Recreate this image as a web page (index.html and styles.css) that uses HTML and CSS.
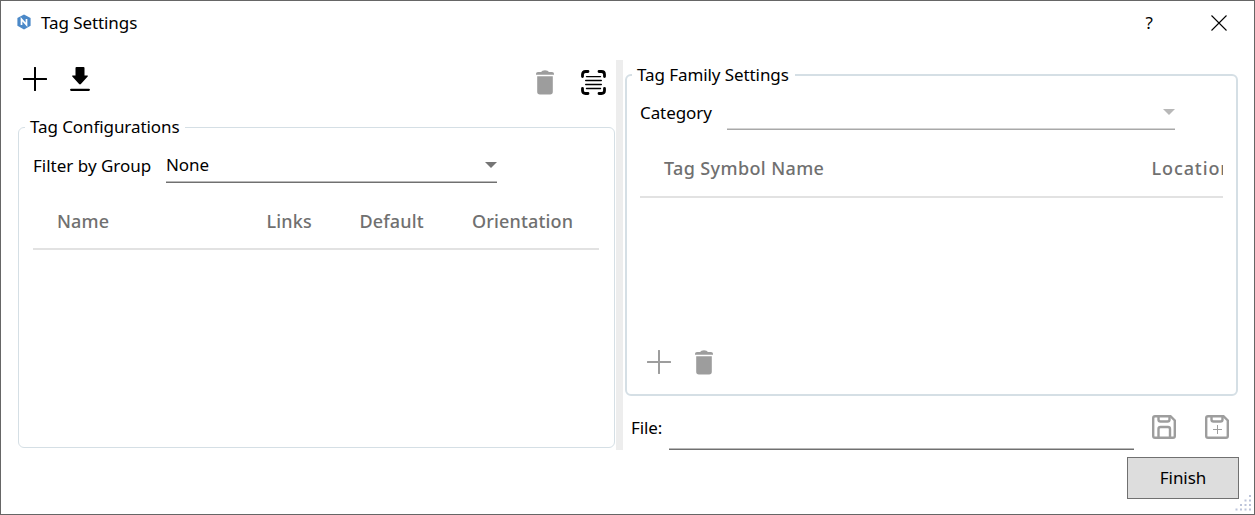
FILE: index.html
```html
<!DOCTYPE html>
<html lang="en">
<head>
<meta charset="utf-8">
<title>Tag Settings</title>
<link rel="stylesheet" href="styles.css">
</head>
<body>
<div class="window">
  <header class="titlebar">
    <svg class="app-icon" width="14" height="16" viewBox="0 0 14 16"><path d="M7 .4 13.6 4v7.800L7 15.500.4 11.800V4z" fill="#4b89c8"/><path d="M4.500 11V5.200L9.500 10.800V5" fill="none" stroke="#fff" stroke-width="1.700"/></svg>
    <h1 class="title">Tag Settings</h1>
    <span class="help">?</span>
    <svg class="close" width="16" height="16" viewBox="0 0 16 16"><path d="M.5.5l15 15M15.500.5l-15 15" stroke="#000" stroke-width="1.100"/></svg>
  </header>
  <main class="content">
    <section class="left">
      <div class="toolbar">
        <svg class="add" width="24" height="24" viewBox="0 0 24 24"><path d="M12 .8v22.400M.8 12h22.400" stroke="#000" stroke-width="2" stroke-linecap="round"/></svg>
        <svg class="download" width="20" height="25" viewBox="0 0 20 25"><path d="M6.500 0h7q1 0 1 1V8.500h2.700q1.300 0 .5 1l-6.800 7.600q-.9.900-1.800 0L2.300 9.500q-.8-1 .5-1h2.700V1q0-1 1-1z"/><path d="M1.200 22.800h17.600" stroke="#000" stroke-width="2.300" stroke-linecap="round"/></svg>
        <svg class="trash" width="18" height="25" viewBox="0 0 18 25"><path d="M0 3.800Q0 2 2 2h3Q6 .3 9 .3T13 2h3q2 0 2 1.800v1H0zM1.200 6.300h15.600v15.500q0 2.700-2.700 2.700H3.900q-2.700 0-2.700-2.700z" fill="#9d9d9d"/></svg>
        <svg class="scan" width="25" height="25" viewBox="0 0 25 25"><path d="M1.500 6.500V4.500q0-3 3-3H7M18 1.500h2.500q3 0 3 3V6.500M23.500 18.500v2q0 3-3 3H18M7 23.500H4.500q-3 0-3-3V18.500" fill="none" stroke="#000" stroke-width="2.800" stroke-linecap="round"/><path d="M5.500 6.600h14M4.700 10.500h15.600M4.700 14.500h15.600M5.500 18.500h14" stroke="#000" stroke-width="1.400" stroke-linecap="round"/></svg>
      </div>
      <fieldset class="group configurations">
        <legend><span class="t-config">Tag Configurations</span></legend>
        <div class="field-row">
          <label class="t-filter">Filter by Group</label>
          <div class="select"><span class="t-none">None</span><svg width="12" height="6" viewBox="0 0 12 6"><path d="M0 0h12L6 6z" fill="#757575"/></svg></div>
        </div>
        <div class="table-head">
          <span class="t-name">Name</span><span class="t-links">Links</span><span class="t-default">Default</span><span class="t-orient">Orientation</span>
        </div>
      </fieldset>
    </section>
    <div class="splitter"></div>
    <section class="right">
      <fieldset class="group family">
        <legend><span class="t-family">Tag Family Settings</span></legend>
        <div class="field-row">
          <label class="t-category">Category</label>
          <div class="select disabled"><svg width="12" height="6" viewBox="0 0 12 6"><path d="M0 0h12L6 6z" fill="#b8b8b8"/></svg></div>
        </div>
        <div class="table-head">
          <span class="t-symbol">Tag Symbol Name</span><span class="t-location">Location</span>
        </div>
        <div class="row-actions">
          <svg width="24" height="24" viewBox="0 0 24 24"><path d="M12 .8v22.400M.8 12h22.400" stroke="#9d9d9d" stroke-width="2" stroke-linecap="round"/></svg>
          <svg width="18" height="25" viewBox="0 0 18 25"><path d="M0 3.800Q0 2 2 2h3Q6 .3 9 .3T13 2h3q2 0 2 1.800v1H0zM1.200 6.300h15.600v15.500q0 2.700-2.700 2.700H3.900q-2.700 0-2.700-2.700z" fill="#9d9d9d"/></svg>
        </div>
      </fieldset>
      <div class="file-row">
        <label class="t-file">File:</label>
        <div class="file-input"></div>
        <svg class="save" width="24" height="24" viewBox="0 0 24 24" fill="none" stroke="#9d9d9d" stroke-width="2.400"><path d="M3 1.200h15.500L22.800 5.500V21q0 1.800-1.800 1.800H3q-1.800 0-1.800-1.800V3q0-1.800 1.800-1.800z"/><path d="M6.500 1v3.500q0 2 2 2h7q2 0 2-2V1M6.500 23V14q0-2 2-2h7.500q2 0 2 2v9"/></svg>
        <svg class="save-add" width="24" height="24" viewBox="0 0 24 24" fill="none" stroke="#9d9d9d" stroke-width="2.400"><path d="M3 1.200h15.500L22.800 5.500V21q0 1.800-1.800 1.800H3q-1.800 0-1.800-1.800V3q0-1.800 1.800-1.800z"/><path d="M6.500 1v3.500q0 2 2 2h7q2 0 2-2V1"/><path d="M12.500 10v9M8 14.500h9" stroke-width="1"/></svg>
      </div>
    </section>
  </main>
  <footer class="footer"><button class="finish"><span class="t-finish">Finish</span></button></footer>
  <svg class="grip" width="17" height="17" viewBox="0 0 17 17" fill="#bcc4da"><path d="M14 0h2v2h-2zM14 4.500h2v2h-2zM14 9h2v2h-2zM14 13.500h2v2h-2zM9.500 4.500h2v2h-2zM9.500 9h2v2h-2zM9.500 13.500h2v2h-2zM5 9h2v2H5zM5 13.500h2v2H5zM.5 13.500h2v2h-2z"/></svg>
</div>
</body>
</html>
```
FILE: styles.css
```css
* { box-sizing: border-box; }
body { margin: 0; background: #fff; color: #000; font: 400 17px/24px "Noto Sans", sans-serif; letter-spacing: -0.08px; }
svg { display: block; flex: none; }
span, label { white-space: nowrap; }
.window { position: relative; width: 1255px; height: 515px; border: 1px solid #666; display: flex; flex-direction: column; overflow: hidden; }
.titlebar { display: flex; align-items: center; height: 44px; padding: 0 27px 0 16px; flex: none; }
.app-icon { margin: 0 10px 3px 0; }
.title { margin: 0; font-size: 17px; font-weight: 400; line-height: 24px; letter-spacing: -0.08px; flex: 1; }
.help { width: 10px; margin-right: 55.500px; }
.content { display: grid; grid-template-columns: 597px 7px 614px; column-gap: 1px; height: 405px; padding: 14px 0 0 17px; flex: none; }
.left, .right { display: flex; flex-direction: column; min-width: 0; }
.splitter { background: #ededed; margin-top: 1px; }
.toolbar { display: flex; height: 56px; padding: 8px 9px 0 5px; flex: none; }
.download { margin-left: 23px; }
.trash { margin: 3px 27px 0 auto; }
.scan { margin-top: 3px; }
.group { margin: 0; min-width: 0; border: 1px solid #d5dfe5; border-radius: 6px; padding: 7px 14px 0; display: block; }
.group legend { padding: 0 6px 0 5px; margin-left: -8px; height: 24px; }
.configurations { flex: 1; margin-bottom: 2px; }
.field-row { display: flex; height: 38px; }
.field-row label { padding-top: 8px; }
.configurations .t-filter { width: 133px; letter-spacing: 0; }
.select { display: flex; align-items: center; justify-content: space-between; width: 331px; height: 37px; border-bottom: 1px solid #707070; box-shadow: inset 0 -1px #b9b9b9; }
.select .t-none { padding-top: 1px; }
.select svg { margin-top: 1px; }
.select.disabled { width: 448px; border-color: #a8a8a8; box-shadow: inset 0 -1px #d4d4d4; justify-content: flex-end; }
.table-head { display: flex; height: 66px; border-bottom: 2px solid #e2e2e2; padding: 25px 0 0 24px; font-size: 18px; font-weight: 500; letter-spacing: 0.15px; color: #707070; overflow: hidden; }
.configurations .table-head { width: 566px; }
.t-name { width: 209.500px; flex: none; }
.t-links { width: 93px; flex: none; }
.t-default { width: 112.500px; flex: none; }
.family { height: 333px; margin: 4px 0 0 1px; border-width: 2px; padding: 6px 13px 0; }
.family .t-category { width: 87px; }
.family .table-head { height: 67px; }
.t-symbol { width: 487.500px; flex: none; letter-spacing: 0.38px; }
.t-location { letter-spacing: 0.9px; }
.row-actions { display: flex; gap: 24px; margin: 152px 0 0 7px; }
.file-row { display: flex; height: 54px; padding-left: 7px; }
.t-file { width: 38px; padding-top: 20px; }
.file-input { width: 465px; border-bottom: 1px solid #707070; box-shadow: inset 0 -1px #b9b9b9; }
.save { margin: 19px 0 0 18px; }
.save-add { margin: 19px 0 0 28.500px; }
.footer { display: flex; justify-content: flex-end; padding: 7px 15px 0 0; }
.finish { width: 112px; height: 42px; background: #ddd; border: 1px solid #707070; padding: 0; font: inherit; color: #000; letter-spacing: inherit; }
.grip { position: absolute; right: 2px; bottom: 2px; }
```
